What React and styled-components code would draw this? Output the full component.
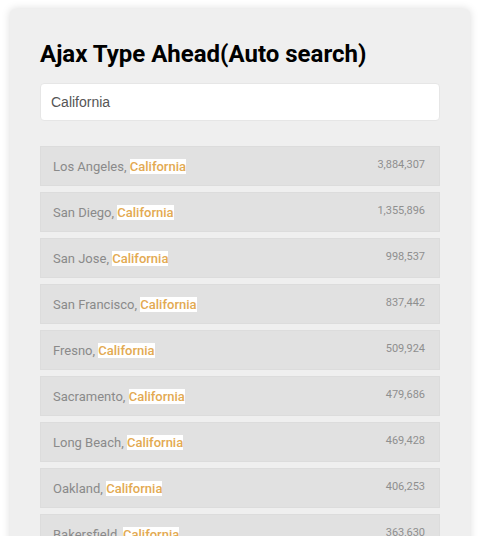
import { createGlobalStyle, styled } from 'styled-components';

const GlobalStyle = createGlobalStyle`
    html, body {
        margin: 0;
        background: #ffffff;
    }
    body {
        font-family: Roboto, 'Liberation Sans', sans-serif;
    }
`;

const Page = styled.div`
    padding: 9px 11px 0 10px;
`;

const Card = styled.div`
    background: #efefef;
    border-radius: 5px;
    box-shadow: 0 0 8px rgba(0, 0, 0, 0.15);
    padding: 30px 30px 0;
    min-height: 600px;
`;

const Title = styled.h2`
    margin: 0 0 14px;
    font-size: 24px;
    font-weight: 700;
    color: #000;
    line-height: 30px;
`;

const SearchInput = styled.input`
    display: block;
    box-sizing: border-box;
    width: 100%;
    height: 38px;
    padding: 0 10px;
    font-family: 'Liberation Sans', Arial, sans-serif;
    font-size: 14px;
    color: #555;
    background: #fff;
    border: 1px solid #e6e6e6;
    border-radius: 4px;
    outline: none;
`;

const Suggestions = styled.ul`
    list-style: none;
    margin: 25px 0 0;
    padding: 0;
    display: flex;
    flex-direction: column;
    gap: 6px;
`;

const Row = styled.li`
    display: flex;
    justify-content: space-between;
    align-items: center;
    height: 40px;
    padding: 0 14px 0 12px;
    background: #e1e1e1;
    border: 1px solid #dcdcdc;
    box-sizing: border-box;
`;

const Name = styled.span`
    font-size: 13px;
    color: #8a8a8a;
`;

const Hl = styled.span`
    background: #fff;
    color: #e3aa52;
    font-weight: 500;
`;

const Population = styled.span`
    font-size: 11px;
    color: #8f8f8f;
    margin-top: -3px;
`;

const cities = [
    ['Los Angeles', '3,884,307'],
    ['San Diego', '1,355,896'],
    ['San Jose', '998,537'],
    ['San Francisco', '837,442'],
    ['Fresno', '509,924'],
    ['Sacramento', '479,686'],
    ['Long Beach', '469,428'],
    ['Oakland', '406,253'],
    ['Bakersfield', '363,630'],
];

export default function App() {
    return (
        <Page>
            <GlobalStyle />
            <Card>
                <Title>Ajax Type Ahead(Auto search)</Title>
                <SearchInput defaultValue="California" />
                <Suggestions>
                    {cities.map(([city, pop]) => (
                        <Row key={city}>
                            <Name>
                                {city}, <Hl>California</Hl>
                            </Name>
                            <Population>{pop}</Population>
                        </Row>
                    ))}
                </Suggestions>
            </Card>
        </Page>
    );
}
